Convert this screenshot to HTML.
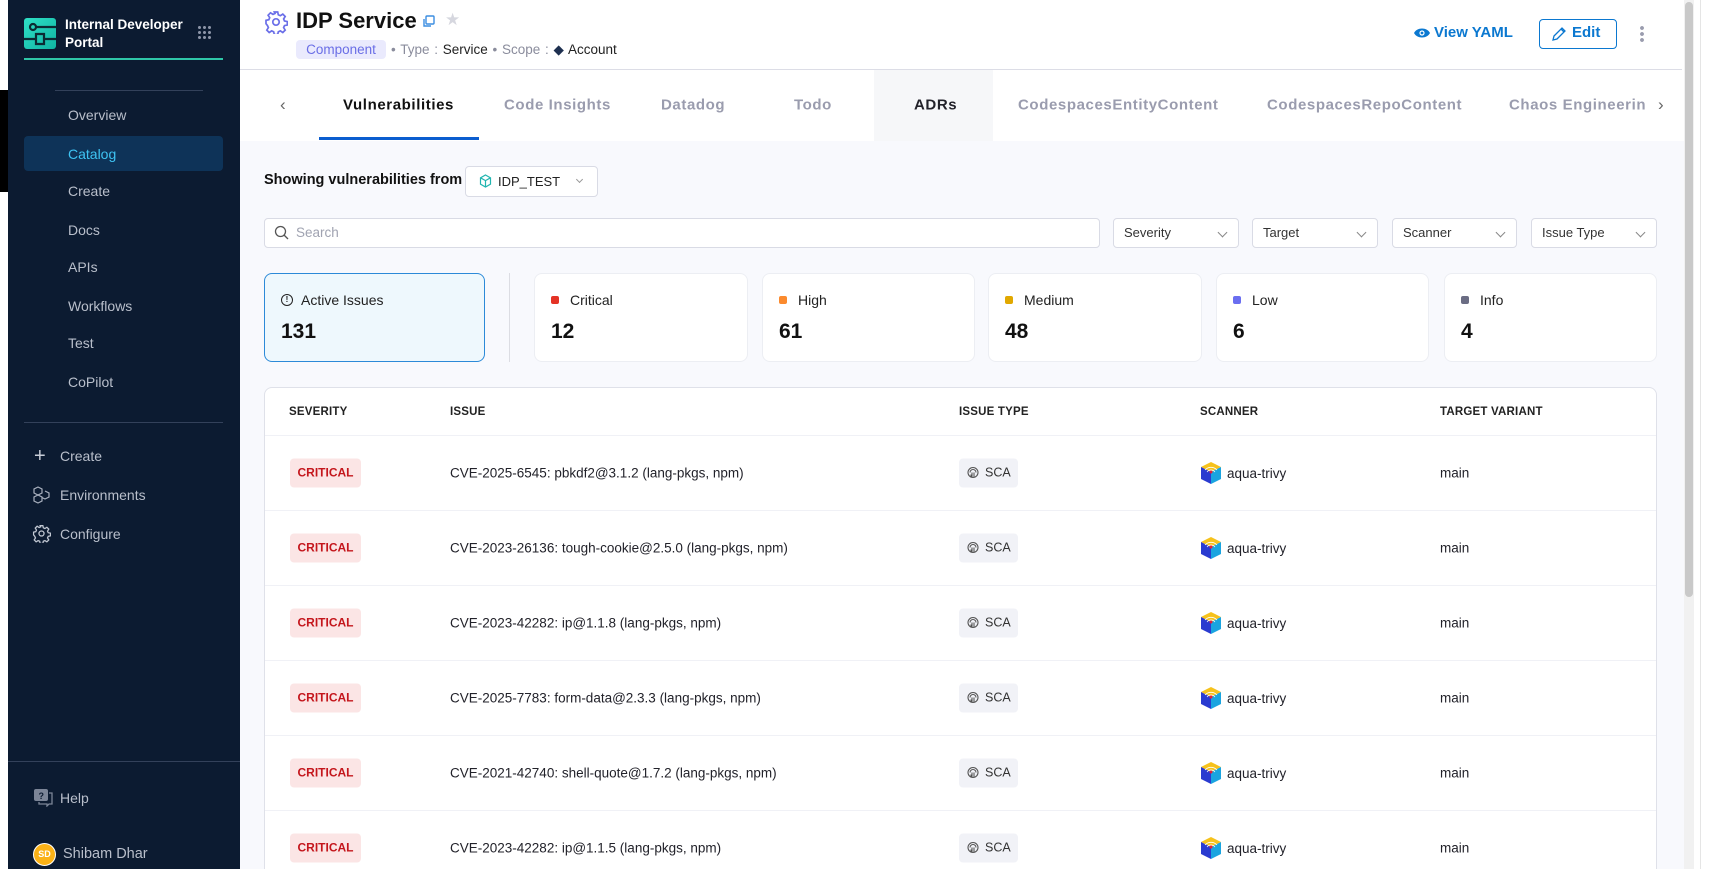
<!DOCTYPE html>
<html><head><meta charset="utf-8"><style>
*{box-sizing:border-box;margin:0;padding:0}
html{width:1724px;height:869px;overflow:hidden}
body{width:1724px;height:869px;overflow:hidden;background:#fff;font-family:"Liberation Sans",sans-serif;position:relative;color:#22222a}
.a{position:absolute}
#sb{left:8px;top:0;width:232px;height:869px;background:#0c1b31}
.nav{position:absolute;left:60px;font-size:14px;color:#b9bfcb;transform:translateY(-50%)}
.main{left:240px;top:0;width:1444px;height:869px;background:#f8f9fd;overflow:hidden}
.tab{position:absolute;top:105px;transform:translateY(-50%);font-size:15px;font-weight:bold;letter-spacing:.6px;color:#9a9cae}
.sel{position:absolute;top:218px;height:30px;background:#fff;border:1px solid #d9dbe5;border-radius:4px;font-size:13px;color:#333;padding:0 10px;line-height:28px}
.sel:after{content:"";position:absolute;right:12px;top:10px;width:6px;height:6px;border-right:1px solid #888;border-bottom:1px solid #888;transform:rotate(45deg)}
.card{position:absolute;top:273px;height:89px;background:#fff;border:1px solid #eceef3;border-radius:8px}
.card .l{position:absolute;left:16px;top:18px;font-size:14px;color:#222;display:flex;align-items:center}
.card .l i{display:inline-block;width:8px;height:8px;border-radius:2px;margin-right:11px}
.card .n{position:absolute;left:16px;top:46px;font-size:21px;font-weight:bold;color:#111}
.th{position:absolute;top:412px;transform:translateY(-50%);font-size:11.5px;font-weight:bold;color:#222;letter-spacing:.2px}
.row{position:absolute;left:0;width:1393px;height:75px;border-top:1px solid #f0f1f6}
.c{position:absolute;top:50%;transform:translateY(-50%);font-size:13.5px;color:#22222a;white-space:nowrap}
.crit{left:25px;width:71px;height:29px;background:#fbe5e5;border-radius:4px;color:#c4161c;font-size:12px;font-weight:bold;text-align:center;line-height:29px}
.sca{left:694px;width:59px;height:29px;background:#f1f2f7;border-radius:4px;font-size:12.5px;line-height:29px;padding-left:26px;color:#333}
.sca svg{position:absolute;left:8px;top:8px}
</style></head><body>
<div class="a" style="left:0;top:90px;width:8px;height:102px;background:#000"></div>
<div id="sb" class="a">
 <div class="a" style="left:16px;top:18px;width:32px;height:31px;border-radius:3px;background:linear-gradient(135deg,#2fe0c5,#10b4a3)">
  <svg width="32" height="31" viewBox="0 0 32 31"><g stroke="#0c2b33" stroke-width="2.2" fill="none"><circle cx="9" cy="9" r="3"/><path d="M12 9H32M0 21H12M12 16h8v10h-8zM20 21h12"/></g></svg></div>
 <div class="a" style="left:57px;top:16px;font-size:13.5px;font-weight:bold;color:#fff;line-height:18px">Internal Developer<br>Portal</div>
 <div class="a" style="left:189px;top:25px;width:14px;height:14px;background:radial-gradient(circle,#8b93a6 1.4px,transparent 1.6px) 0 0/5px 5px"></div>
 <div class="a" style="left:16px;top:58px;width:199px;height:2px;background:#2fc7a8"></div>
 <div class="a" style="left:47px;top:90px;width:148px;height:1px;background:#33415a"></div>
 <div class="nav" style="top:115px">Overview</div>
 <div class="a" style="left:16px;top:136px;width:199px;height:35px;background:#0e3358;border-radius:4px"></div>
 <div class="nav" style="top:154px;color:#3ec3f2">Catalog</div>
 <div class="nav" style="top:191px">Create</div>
 <div class="nav" style="top:230px">Docs</div>
 <div class="nav" style="top:267px">APIs</div>
 <div class="nav" style="top:306px">Workflows</div>
 <div class="nav" style="top:343px">Test</div>
 <div class="nav" style="top:382px">CoPilot</div>
 <div class="a" style="left:16px;top:422px;width:199px;height:1px;background:#33415a"></div>
 <div class="a" style="left:26px;top:447px;font-size:20px;color:#c9ced8;line-height:18px">+</div>
 <div class="nav" style="left:52px;top:456px">Create</div>
 <svg class="a" style="left:25px;top:486px" width="18" height="18" viewBox="0 0 18 18" fill="none" stroke="#aab1bf" stroke-width="1.2"><path d="M5 1l4 2v4l-4 2-4-2V3zM5 9l4 2v4l-4 2-4-2v-4zM12 5l4 2v4l-4 2-3-1.5"/></svg>
 <div class="nav" style="left:52px;top:495px">Environments</div>
 <svg class="a" style="left:24px;top:524px" width="19" height="19" viewBox="0 0 24 24" fill="none" stroke="#c2c8d3" stroke-width="1.6"><circle cx="12" cy="12" r="3.2"/><path d="M10.3 2h3.4l.6 2.8 2 .9 2.5-1.6 2.4 2.4-1.6 2.5.9 2 2.8.6v3.4l-2.8.6-.9 2 1.6 2.5-2.4 2.4-2.5-1.6-2 .9-.6 2.8h-3.4l-.6-2.8-2-.9-2.5 1.6-2.4-2.4 1.6-2.5-.9-2L2 13.7v-3.4l2.8-.6.9-2-1.6-2.5 2.4-2.4 2.5 1.6 2-.9z"/></svg>
 <div class="nav" style="left:52px;top:534px">Configure</div>
 <div class="a" style="left:0;top:761px;width:232px;height:1px;background:#33415a"></div>
 <svg class="a" style="left:26px;top:789px" width="19" height="18" viewBox="0 0 19 18"><rect x="0" y="0" width="14" height="12" rx="2" fill="#7c8597"/><text x="4.5" y="10" font-size="9" font-weight="bold" fill="#0c1b31" font-family="Liberation Sans">?</text><path d="M15 4h3v11h-3l-2 2v-2H5v-2" stroke="#7c8597" stroke-width="1.3" fill="none"/></svg>
 <div class="nav" style="left:52px;top:798px">Help</div>
 <div class="a" style="left:25px;top:843px;width:23px;height:23px;border-radius:50%;background:#fbb217;border:1px solid #fff;color:#fff;font-size:9px;font-weight:bold;text-align:center;line-height:21px">SD</div>
 <div class="nav" style="left:55px;top:854px;font-size:14.5px">Shibam Dhar</div>
</div>
<div class="a main">
 <div class="a" style="left:0;top:0;width:1444px;height:141px;background:#fff"></div>
 <div class="a" style="left:0;top:69px;width:1442px;height:1px;background:#dcdde6"></div>
 <svg class="a" style="left:24px;top:10px" width="24" height="24" viewBox="0 0 24 24" fill="none" stroke="#6b6fe8" stroke-width="1.7"><circle cx="12" cy="12" r="3.2"/><path d="M10.3 2h3.4l.6 2.8 2 .9 2.5-1.6 2.4 2.4-1.6 2.5.9 2 2.8.6v3.4l-2.8.6-.9 2 1.6 2.5-2.4 2.4-2.5-1.6-2 .9-.6 2.8h-3.4l-.6-2.8-2-.9-2.5 1.6-2.4-2.4 1.6-2.5-.9-2L2 13.7v-3.4l2.8-.6.9-2-1.6-2.5 2.4-2.4 2.5 1.6 2-.9z"/></svg>
 <div class="a" style="left:56px;top:8px;font-size:22px;font-weight:bold;color:#111">IDP Service</div>
 <svg class="a" style="left:182px;top:15px" width="13" height="13" viewBox="0 0 13 13" fill="none" stroke="#3b8de0" stroke-width="1.4"><rect x="4" y="1" width="8" height="8" rx="1"/><path d="M2 4v7h7"/></svg>
 <div class="a" style="left:205px;top:10px;font-size:17px;color:#d6d7df">★</div>
 <div class="a" style="left:56px;top:40px;width:90px;height:19px;background:#eaeafd;border-radius:4px;color:#6a6ee6;font-size:13.5px;text-align:center;line-height:19px">Component</div>
 <div class="a" style="left:151px;top:41px;font-size:13.5px;color:#8a8c9c;line-height:17px;word-spacing:1px">• Type : <span style="color:#222">Service</span> • Scope : <span style="color:#1e3050">◆</span> <span style="color:#222">Account</span></div>
 <svg class="a" style="left:1174px;top:27px" width="16" height="12" viewBox="0 0 16 12"><path d="M0 6c3-6 13-6 16 0-3 6-13 6-16 0z" fill="#0b78d0"/><circle cx="8" cy="6" r="2.6" fill="#fff"/><circle cx="8" cy="6" r="1.4" fill="#0b78d0"/></svg>
 <div class="a" style="left:1194px;top:24px;font-size:15px;font-weight:bold;color:#0b78d0">View YAML</div>
 <div class="a" style="left:1299px;top:19px;width:78px;height:30px;border:1px solid #0b78d0;border-radius:4px"></div>
 <svg class="a" style="left:1312px;top:26px" width="15" height="15" viewBox="0 0 15 15" fill="none" stroke="#0b78d0" stroke-width="1.3"><path d="M1 14l1-4 8-8 3 3-8 8zM9 3l3 3"/></svg>
 <div class="a" style="left:1332px;top:24px;font-size:15px;font-weight:bold;color:#0b78d0">Edit</div>
 <div class="a" style="left:1400px;top:25px;width:4px;height:18px;background:radial-gradient(circle,#9a9cae 1.8px,transparent 2px) 0 0/4px 6px"></div>
 <div class="a" style="left:634px;top:70px;width:119px;height:71px;background:#f6f7f9"></div>
 <div class="tab" style="left:40px;font-weight:normal;color:#666;font-size:17px">‹</div>
 <div class="tab" style="left:103px;color:#111">Vulnerabilities</div>
 <div class="a" style="left:79px;top:137px;width:160px;height:3px;background:#0b5dcf"></div>
 <div class="tab" style="left:264px">Code Insights</div>
 <div class="tab" style="left:421px">Datadog</div>
 <div class="tab" style="left:554px">Todo</div>
 <div class="tab" style="left:674px;color:#22222a">ADRs</div>
 <div class="tab" style="left:778px">CodespacesEntityContent</div>
 <div class="tab" style="left:1027px">CodespacesRepoContent</div>
 <div class="tab" style="left:1269px">Chaos Engineerin</div>
 <div class="tab" style="left:1418px;font-weight:normal;color:#666;font-size:17px">›</div>

 <div class="a" style="left:24px;top:172px;font-size:14.5px;font-weight:bold;color:#111">Showing vulnerabilities from</div>
 <div class="a" style="left:225px;top:166px;width:133px;height:31px;background:#fff;border:1px solid #d9dbe5;border-radius:4px"></div>
 <svg class="a" style="left:239px;top:174px" width="13" height="14" viewBox="0 0 13 14" fill="none" stroke="#22b5b0" stroke-width="1.2"><path d="M6.5 1l5 2.8v6.4l-5 2.8-5-2.8V3.8zM1.5 3.8l5 2.8 5-2.8M6.5 6.6V13"/></svg>
 <div class="a" style="left:258px;top:174px;font-size:13px;color:#222">IDP_TEST</div>
 <div class="a" style="left:337px;top:177px;width:5px;height:5px;border-right:1px solid #999;border-bottom:1px solid #999;transform:rotate(45deg)"></div>

 <div class="a" style="left:24px;top:218px;width:836px;height:30px;background:#fff;border:1px solid #d9dbe5;border-radius:4px"></div>
 <svg class="a" style="left:34px;top:225px" width="15" height="15" viewBox="0 0 15 15" fill="none" stroke="#555" stroke-width="1.3"><circle cx="6.5" cy="6.5" r="5"/><path d="M10 10l4 4"/></svg>
 <div class="a" style="left:56px;top:225px;font-size:13.5px;color:#a0a3b1">Search</div>
 <div class="sel" style="left:873px;width:126px">Severity</div>
 <div class="sel" style="left:1012px;width:126px">Target</div>
 <div class="sel" style="left:1152px;width:125px">Scanner</div>
 <div class="sel" style="left:1291px;width:126px">Issue Type</div>

 <div class="card" style="left:24px;width:221px;background:#eef8fd;border-color:#2c8ad8"><div class="l"><span style="display:inline-block;width:12px;height:12px;border:1.5px solid #222;border-radius:50%;margin-right:8px;font-size:8px;font-weight:bold;text-align:center;line-height:9px">!</span>Active Issues</div><div class="n">131</div></div>
 <div class="a" style="left:269px;top:273px;width:1px;height:89px;background:#dcdde3"></div>
 <div class="card" style="left:294px;width:214px"><div class="l"><i style="background:#e43326"></i>Critical</div><div class="n">12</div></div>
 <div class="card" style="left:522px;width:213px"><div class="l"><i style="background:#fb8a2e"></i>High</div><div class="n">61</div></div>
 <div class="card" style="left:748px;width:214px"><div class="l"><i style="background:#e1a800"></i>Medium</div><div class="n">48</div></div>
 <div class="card" style="left:976px;width:213px"><div class="l"><i style="background:#6a6ef0"></i>Low</div><div class="n">6</div></div>
 <div class="card" style="left:1204px;width:213px"><div class="l"><i style="background:#6b6d84"></i>Info</div><div class="n">4</div></div>

 <div class="a" style="left:24px;top:387px;width:1393px;height:500px;background:#fff;border:1px solid #dfe1e9;border-radius:8px 8px 0 0;overflow:hidden">
  <div class="th" style="left:24px;top:24px">SEVERITY</div>
  <div class="th" style="left:185px;top:24px">ISSUE</div>
  <div class="th" style="left:694px;top:24px">ISSUE TYPE</div>
  <div class="th" style="left:935px;top:24px">SCANNER</div>
  <div class="th" style="left:1175px;top:24px">TARGET VARIANT</div>
  <div id="rows"></div>
 </div>
</div>
<div class="a" style="left:1684px;top:0;width:10px;height:869px;background:#f1f1f1"></div>
<div class="a" style="left:1685px;top:2px;width:8px;height:595px;background:#c9c9c9;border-radius:4px"></div>
<div class="a" style="left:1700px;top:0;width:1px;height:869px;background:#e5e5e5"></div>
<script>
var d=[["CVE-2025-6545: pbkdf2@3.1.2 (lang-pkgs, npm)"],["CVE-2023-26136: tough-cookie@2.5.0 (lang-pkgs, npm)"],["CVE-2023-42282: ip@1.1.8 (lang-pkgs, npm)"],["CVE-2025-7783: form-data@2.3.3 (lang-pkgs, npm)"],["CVE-2021-42740: shell-quote@1.7.2 (lang-pkgs, npm)"],["CVE-2023-42282: ip@1.1.5 (lang-pkgs, npm)"]];
var h="";
var icon='<svg width="22" height="24" viewBox="0 0 22 24"><path d="M11 1l10 5-10 5-10-5z" fill="#f6c21c"/><path d="M1 6l10 5v12L1 18z" fill="#2a3bd0"/><path d="M21 6l-10 5v12l10-5z" fill="#1aa4e0"/><path d="M5 9a8 8 0 0 1 12 0M7 11a5 5 0 0 1 8 0" stroke="#fff" stroke-width=".8" fill="none"/><circle cx="11" cy="11" r="1.5" fill="#e0203a"/></svg>';
var sca='<svg width="12" height="12" viewBox="0 0 12 12" fill="none" stroke="#555" stroke-width="1.1"><circle cx="6" cy="6" r="5"/><path d="M3 6a3 3 0 0 1 6 0M5 6v5M7 6v5M4 8v3"/></svg>';
d.forEach(function(r,i){var top=47+i*75;
h+='<div class="a row" style="top:'+top+'px"><div class="c crit">CRITICAL</div><div class="c" style="left:185px">'+r[0]+'</div><div class="c sca">'+sca+'SCA</div><div class="c" style="left:935px;display:flex;align-items:center">'+icon+'<span style="margin-left:5px">aqua-trivy</span></div><div class="c" style="left:1175px">main</div></div>';});
document.getElementById("rows").innerHTML=h;
</script>
</body></html>
